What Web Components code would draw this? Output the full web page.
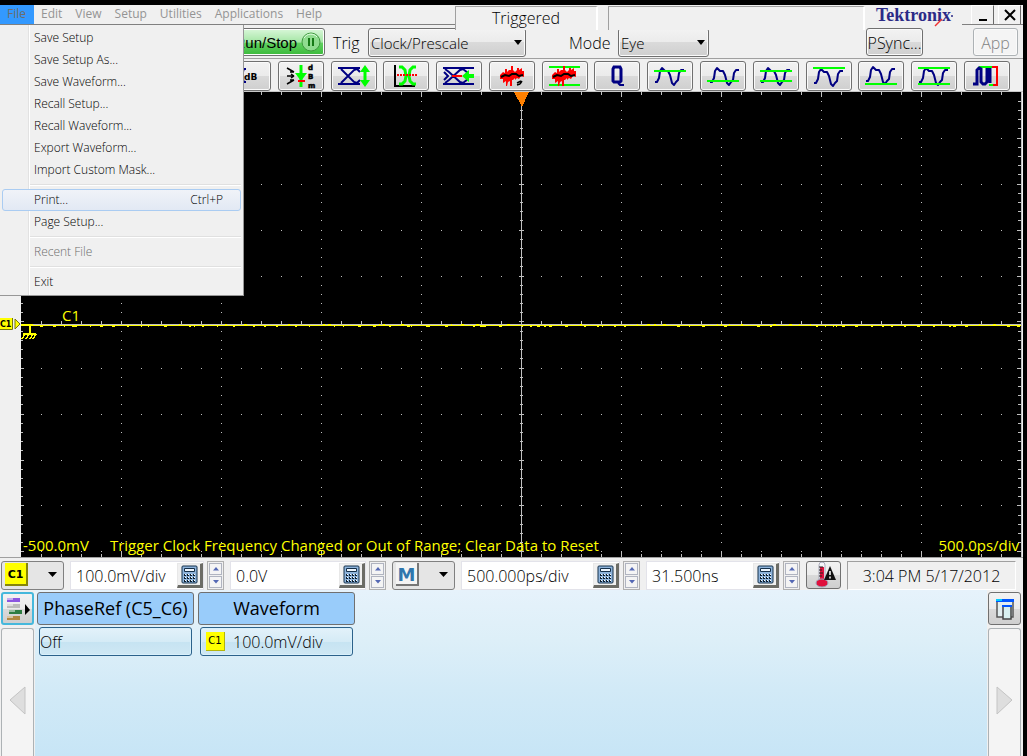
<!DOCTYPE html>
<html lang="en">
<head>
<meta charset="utf-8">
<title>Oscilloscope</title>
<style>
html,body{margin:0;height:100%;background:#000}
body{font-family:"Open Sans","Noto Sans",sans-serif;font-weight:300;font-size:16px;color:#000}
</style>
</head>
<body>
<scope-app></scope-app>
<script>
const define=(name,html,setup)=>{
  const t=document.createElement('template');
  t.innerHTML='<style>*{box-sizing:border-box}button,input,select{font:inherit;color:inherit;margin:0}button{padding:0}</style>'+html;
  customElements.define(name,class extends HTMLElement{
    connectedCallback(){
      if(this.shadowRoot)return;
      this.attachShadow({mode:'open'}).append(t.content.cloneNode(true));
      if(setup)setup(this,this.shadowRoot);
    }
  });
};

/* ---------- toolbar glyphs, 32 x 22 ---------- */
const N='fill="none" stroke="#000082" stroke-width="2"';
const G='stroke="#00ff00" stroke-width="2"';
const wave=(x,y)=>`<path ${N} stroke-linejoin="round" transform="translate(${x} ${y})" d="M1 16h2l2-4 1-7 2-3 3 3h3l2 4 2 8 2 2 2-3 2-2 1-7 2-3h3"/>`;
const noise='<path fill="#f00" d="M0 10l3-3 2 1V4h2v3l2-2h2V1h2v4l2 2 2-2V3h2v2l3-2v3h2v6l-3-1-2 3-2-1-2 2v-2l-2 2h-1v6h-2v-5l-2 1-1 4H6v-5l-3 2v-4H0z"/><path fill="none" stroke="#000" stroke-width="2" d="M1 12l4-2 4 1 3-2 4 0 3 2 4-1"/>';
const glyphs={
 eyedb:`<path ${N} d="M0 4h14M0 17h14M2 5l10 11M12 5L2 16"/><text x="12" y="15" font-family="DejaVu Sans" font-weight="700" font-size="9">dB</text>`,
 dbm:`<path stroke="#000" stroke-width="1.5" fill="none" d="M2 3l7 4M9 7l-4 0M2 11h7M9 11l-3-2M9 11l-3 2M2 19l7-4M9 15l-4 0"/><path stroke="#0f0" stroke-width="3" d="M16 0v22"/><path fill="#0f0" d="M10 8h12l-6 8z"/><path stroke="#f00" stroke-width="2" d="M13 16h7"/><g font-family="DejaVu Sans" font-weight="700" font-size="7" stroke="#000" stroke-width=".5"><text x="23" y="5">d</text><text x="23" y="14">B</text><text x="23" y="23">m</text></g>`,
 eyeheight:`<path ${N} d="M0 3h22M0 19h22M3 4l13 13 3 1 3-3M3 18L16 5l3-1 3 3"/><path stroke="#0f0" stroke-width="3" d="M27 4v14"/><path fill="#0f0" d="M27 0l5 7H22zM27 22l5-7H22z"/>`,
 cross:`<path fill="none" stroke="#000" stroke-width="2" d="M5 0v21h20"/><path fill="none" stroke="#0f0" stroke-width="3" d="M9 2h3l3 3 1 6-1 5-3 3H9M26 2h-3l-3 3-1 6 1 5 3 3h3"/><path stroke="#f00" stroke-width="2" stroke-dasharray="2 1" d="M7 10h20"/>`,
 eyewidth:`<path ${N} d="M0 3h31M0 19h31M2 4l4 3 11 10 3 1 5-4M2 18l4-3L17 5l3-1 5 4M1 7l4 4-4 4"/><path stroke="#f00" stroke-width="2" d="M9 11h10"/><path fill="#0f0" d="M19 11l7-6v4h5v4h-5v4z"/>`,
 noise:`<g transform="translate(4 0)">${noise}<path stroke="#000" stroke-width="1.5" d="M17 18l4-2M17 20l3-1M20 19l2-3"/></g>`,
 noise2:`<path ${G} d="M0 2h31M0 20h31"/><g transform="translate(3 0)">${noise}</g>`,
 q:`<path fill="none" stroke="#000082" stroke-width="3" d="M12 4l1-2h6l1 2v12l-1 1h-6l-1-1z"/><path fill="none" stroke="#000082" stroke-width="2" d="M17 18l2 2h4"/>`,
 w1:`${wave(0,1)}<path ${G} d="M0 6h32"/>`,
 w2:`${wave(2,1)}<path ${G} d="M0 16h32"/>`,
 w3:`${wave(0,1)}<path ${G} d="M0 6h32M0 16h32"/>`,
 w4:`${wave(0,2)}<path ${G} d="M0 3h32"/>`,
 w5:`${wave(0,0)}<path ${G} d="M0 19h32"/>`,
 w6:`${wave(0,1)}<path ${G} d="M0 3h32M0 19h32"/>`,
 gate:`<path ${G} d="M8 2h18M18 20h6"/><path fill="none" stroke="#000082" stroke-width="3" d="M2 19h4V5l2-2 2 1v13l2 2h2l2-2V3M19 3v15"/><path fill="none" stroke="#f00" stroke-width="2" d="M21 2h5v18h-4"/>`
};
define('tool-button',`<style>:host{display:block;width:46px;height:30px}
button{display:grid;place-items:center;width:100%;height:100%;border:1px solid #707070;border-radius:3px;background:linear-gradient(#f2f2f2,#ebebeb 50%,#dadada 50%,#cfcfcf);box-shadow:inset 0 0 0 1px #fafafa}svg{width:32px;height:22px;overflow:visible}</style><button type="button"></button>`,
(h,r)=>{const b=r.querySelector('button');b.setAttribute('aria-label',h.getAttribute('label'));b.innerHTML=`<svg viewBox="0 0 32 22">${glyphs[h.getAttribute('icon')]}</svg>`});

define('menu-bar',`<style>:host{display:flex;width:455px;flex:none;font-size:12px;line-height:18px;font-weight:400;border-bottom:1px solid #808080;background:#f0f0f0}
a{color:#949494;text-decoration:none;padding:0 6px 0 7px}a.on{background:#3399ff;color:#6d6d6d;padding-right:8px}</style>
<a class="on" href="#file">File</a><a href="#edit">Edit</a><a href="#view">View</a><a href="#setup">Setup</a><a href="#util">Utilities</a><a href="#apps">Applications</a><a href="#help">Help</a>`);

define('menu-item',`<style>:host{display:block}button{display:flex;justify-content:space-between;width:100%;height:22px;padding:0 17px 0 31px;border:1px solid transparent;border-radius:3px;background:none;line-height:20px;text-align:left}
:host([active]) button{border-color:#aaccf2;background:linear-gradient(#f0f3f8,#e2e9f4)}:host([off]) button{color:#6d6d6d}</style><button type="button"><span><slot></slot></span><slot name="key"></slot></button>`);

define('file-menu',`<style>:host{display:block;width:244px;padding:2px 2px;font-size:12px;background:linear-gradient(90deg,transparent 28px,#e2e2e2 28px,#e2e2e2 29px,#fff 29px,#fff 30px,transparent 30px) no-repeat #f0f0f0;border:solid #979797;border-width:0 1px 1px 0;box-sizing:border-box}
hr{margin:3px 0 3px 28px;border:0;height:2px;background:linear-gradient(#e0e0e0 50%,#fff 50%)}</style>
<menu-item>Save Setup</menu-item><menu-item>Save Setup As...</menu-item><menu-item>Save Waveform...</menu-item><menu-item>Recall Setup...</menu-item><menu-item>Recall Waveform...</menu-item><menu-item>Export Waveform...</menu-item><menu-item>Import Custom Mask...</menu-item><hr>
<menu-item active>Print...<span slot="key">Ctrl+P</span></menu-item><menu-item>Page Setup...</menu-item><hr><menu-item off>Recent File</menu-item><hr><menu-item>Exit</menu-item>`);

define('title-strip',`<style>:host{display:flex;height:20px;position:relative;z-index:1;background:#f0f0f0}
.state{width:143px;height:24px;border:solid #a0a0a0;border-width:1px 0 0 1px;border-right:2px solid #fff;margin-top:1px;text-align:center;line-height:23px;background:#f0f0f0;flex:none}
.blank{flex:1;height:24px;margin:1px 0 0 10px;border:solid #a0a0a0;border-width:1px 0 0 1px;border-right:2px solid #fff;background:#f0f0f0}
.logo{width:97px;padding-left:11px;color:#2b2a86;font:bold 18px/20px "Liberation Serif",serif;display:flex;position:relative}
.logo svg{position:absolute;left:68px;top:7px;width:20px;height:15px}
.win{display:flex;gap:4px;padding-left:9px;border-bottom:1px solid #808080;width:61px}
.win button{width:23px;height:19px;border:1px solid #fff;border-right-color:#696969;border-bottom:0;background:#f0f0f0;display:grid;place-items:center}</style>
<menu-bar></menu-bar><div class="state">Triggered</div><div class="blank"></div>
<div class="logo">Tektronix<svg viewBox="0 0 20 15"><path d="M2 14l7-7" stroke="#f03030" stroke-width="1.500"/><circle cx="19" cy="4" r="1" fill="#2b2a86"/></svg></div>
<div class="win"><button type="button" aria-label="Minimize"><svg width="12" height="14"><path d="M2 12h8" stroke="#000" stroke-width="2"/></svg></button><button type="button" aria-label="Close"><svg width="12" height="14"><path d="M1 2l10 10M11 2L1 12" stroke="#000" stroke-width="2"/></svg></button></div>`);

define('pick-list',`<style>:host{display:block;position:relative;height:29px;font-size:15px}
select{appearance:none;width:100%;height:100%;padding:0 2px;border:1px solid #707070;border-radius:3px;background:linear-gradient(#f2f2f2,#ebebeb 50%,#dadada 50%,#cfcfcf);box-shadow:inset 0 0 0 1px #fafafa}
svg{position:absolute;right:4px;top:12px;pointer-events:none}</style><select></select><svg width="8" height="5"><path d="M0 0h8L4 5z"/></svg>`,
(h,r)=>{const s=r.querySelector('select');s.setAttribute('aria-label',h.getAttribute('label'));s.add(new Option(h.getAttribute('value')))});

define('run-row',`<style>:host{display:flex;align-items:flex-start;height:34px;padding:3px 5px 0 205px;background:#f0f0f0;border-bottom:1px solid #a0a0a0;box-sizing:border-box}
.run{width:120px;height:28px;border:1px solid #707070;border-radius:3px;background:linear-gradient(#d9f7d9,#a5e6a5 50%,#5fd05f 55%,#3cba3c);box-shadow:inset 0 0 0 1px #fff;display:flex;align-items:center;justify-content:flex-end;gap:4px;padding-right:3px;font-size:15px;font-family:"Liberation Sans",sans-serif}
.lab{line-height:31px;width:43px;padding-left:8px}.mode{margin-left:35px;width:57px}
.trig{width:158px}.eye{width:91px}
.b{height:28px;border:1px solid #707070;border-radius:3px;background:linear-gradient(#f2f2f2,#ebebeb 50%,#dadada 50%,#cfcfcf);padding-top:2px;box-shadow:inset 0 0 0 1px #fafafa}
.ps{width:57px;margin-left:auto}.app{width:45px;margin-left:50px;color:#838383;background:#f4f4f4;border-color:#adb2b5}</style>
<button class="run" type="button">Run/Stop<svg width="20" height="20"><circle cx="10" cy="10" r="9" fill="#8fdc8f" stroke="#3f9a3f"/><path d="M3 6a8 8 0 0 1 13-1" fill="none" stroke="#e5ffe5"/><path d="M8 6v8M12 6v8" stroke="#167a16" stroke-width="2"/></svg></button>
<span class="lab">Trig</span><pick-list class="trig" label="Trig" value="Clock/Prescale"></pick-list>
<span class="lab mode">Mode</span><pick-list class="eye" label="Mode" value="Eye"></pick-list>
<button class="b ps" type="button">PSync...</button><button class="b app" type="button" disabled>App</button>`);

define('tool-row',`<style>:host{display:flex;justify-content:space-between;height:33px;padding:2px 13px 0 225px;background:#f0f0f0;border-bottom:1px solid #c8c8c8;box-sizing:border-box}</style>`,
(h,r)=>[['eyedb','Extinction ratio dB'],['dbm','Average power'],['eyeheight','Eye height'],['cross','Crossing'],['eyewidth','Eye width'],['noise','Jitter'],['noise2','Jitter levels'],['q','Q factor'],['w1','High'],['w2','Low'],['w3','Amplitude'],['w4','Max'],['w5','Min'],['w6','Peak to peak'],['gate','Gate']].forEach(([i,l])=>{const b=document.createElement('tool-button');b.setAttribute('icon',i);b.setAttribute('label',l);r.append(b)}));

define('scope-screen',`<style>:host{display:flex;height:466px;background:#f0f0f0;border-bottom:1px solid #a0a0a0;box-sizing:border-box;font-size:15px;font-weight:400}
.edge{width:21px;flex:none;padding-top:224px}.edge svg{display:block}
.view{flex:1;position:relative;background:#000;color:#ff0;margin-right:1px;border-right:1px solid #c0c0c0}
.grid{display:block;width:100%;height:465px}
.c1{position:absolute;left:41px;top:213px;line-height:20px}
.foot{position:absolute;left:2px;right:2px;bottom:2px;display:flex;line-height:20px}
.msg{margin-left:21px}.rate{margin-left:auto}</style>
<div class="edge"><svg width="21" height="16"><path fill="#ff0" d="M0 2h12v11H0z"/><path fill="none" stroke="#77770a" d="M0 13.500h12.500V2"/><text x="0" y="11" font-family="DejaVu Sans" font-weight="700" font-size="8">C1</text><path fill="#ff0" stroke="#77770a" d="M15 3l5 5-5 5z"/></svg></div>
<div class="view"><svg class="grid" viewBox="0 0 1000 465" preserveAspectRatio="none" shape-rendering="crispEdges"></svg><span class="c1">C1</span><div class="foot"><span>-500.0mV</span><span class="msg">Trigger Clock Frequency Changed or Out of Range; Clear Data to Reset</span><span class="rate">500.0ps/div</span></div></div>`,
(h,r)=>{
  let g='',y='',seed=7;
  const p=(x,t,w,ht)=>`M${x} ${t}h${w}v${ht}h${-w}z`;
  const rnd=()=>(seed=(seed*16807)%2147483647)/2147483647;
  for(let j=1;j<=50;j++){
    const t=Math.floor(j*9.2),big=j%5===0;
    for(let i=1;i<10;i++)if(i!==5)g+=p(i*100,t,1,1);
    g+=p(0,t,big?3:2,1)+p(big?996:997,t,4,1)+p(big?498:499,t,big?5:3,1);
    if(big)for(let x=20;x<1000;x+=20)g+=p(x,t,1,1);
  }
  for(let x=20;x<1000;x+=20){const l=x%100?3:5;g+=p(x,0,1,l)+p(x,465-l,1,l)+p(x,230,1,2)}
  g+=p(500,0,1,465)+p(0,232,1000,1);
  for(let x=2;x<1000;x+=3+Math.floor(rnd()*14))y+=p(x,rnd()<.3?232:234,1+Math.floor(rnd()*3),1);
  y+=p(0,233,1000,1);
  r.querySelector('.grid').innerHTML=`<path fill="#c0c0c0" d="${g}"/><path fill="#ff0" d="${y}"/><path d="M0 232h10v2H0zM8 234h2v7H8zM2 241h13v2H2z" fill="#ff0"/><path d="M4 242l-3 5M8 242l-3 5M12 242l-3 5M15 242l-3 5" stroke="#ff0" stroke-width="1.500"/><path fill="#ff8000" d="M493 0h15l-7 15z"/>`;
});

define('source-pick',`<style>:host{display:block;width:63px;flex:none;height:29px}
button{width:100%;height:100%;border:1px solid #808080;border-radius:3px;background:#e5e5e5;display:flex;align-items:center;justify-content:space-between;padding:0 6px 2px 3px}
b{width:23px;height:23px;border:solid #777;border-width:0 2px 2px 0;font:bold 11px/24px "DejaVu Sans",sans-serif;background:#ff0}
:host([math]) b{background:#f4f4f4;color:#2f76ad;font-size:18px}:host(:not([math])) b{border-color:#85850a}</style><button type="button"><b><slot></slot></b><svg width="9" height="5"><path d="M0 0h9L4.500 5z"/></svg></button>`);

define('value-field',`<style>:host{display:flex;height:29px;gap:3px;min-width:0}
.box{flex:1;display:flex;background:#fff;border:1px solid #e3e3ea;min-width:0}
input{flex:1;width:0;min-width:0;border:0;background:none;padding:0 0 0 5px;outline:0}
.calc{width:26px;height:25px;flex:none;margin-top:1px;border:1px solid #e8e8e8;border-right:3px solid #6c6c66;border-bottom:3px solid #6c6c66;background:#f0f0f0;display:grid;place-items:center}
.spin{width:17px;flex:none;display:grid;gap:1px;border:1px solid #b0b0b0;padding:1px}
.spin button{border:1px solid #b0b4c0;background:#f4f4f4;display:grid;place-items:center;min-height:0}</style>
<div class="box"><input><button class="calc" type="button" aria-label="Keypad"><svg width="17" height="19"><rect x="1" y="1" width="15" height="17" rx="1" fill="#8fb4dc" stroke="#15304a"/><path fill="#eef6ff" stroke="#15304a" d="M3.500 3.500h10v3h-10z"/><path fill="none" stroke="#0b1e30" stroke-width="2" stroke-dasharray="2 1" d="M3 10h12M3 13h12M3 16h12"/><path fill="none" stroke="#fff" stroke-dasharray="1 2" d="M4 9.500h11M4 12.500h11M4 15.500h11"/></svg></button></div>
<div class="spin"><button type="button" aria-label="Increase"><svg width="6" height="4"><path d="M0 3.500h6L3 0z" fill="#5468b4"/></svg></button><button type="button" aria-label="Decrease"><svg width="6" height="4"><path d="M0 0h6L3 3.500z" fill="#5468b4"/></svg></button></div>`,
(h,r)=>{const i=r.querySelector('input');i.value=h.getAttribute('value');i.setAttribute('aria-label',h.getAttribute('label'))});

define('status-bar',`<style>:host{display:flex;gap:6px;height:32px;padding:3px 7px 0 1px;background:#f0f0f0;box-sizing:border-box}
.a{flex:154 1 0}.b{flex:156 1 0}.c{flex:179 1 0}.d{flex:154 1 0}
.temp{width:35px;flex:none;height:28px;border:1px solid #707070;border-radius:3px;background:linear-gradient(#f2f2f2,#ebebeb 50%,#dadada 50%,#cfcfcf);display:grid;place-items:center}
time{width:169px;flex:none;border:1px solid #fff;border-top-color:#a0a0a0;border-left-color:#a0a0a0;text-align:center;line-height:29px;height:29px}</style>
<source-pick>C1</source-pick><value-field class="a" label="Vertical scale" value="100.0mV/div"></value-field><value-field class="b" label="Vertical offset" value="0.0V"></value-field><source-pick math>M</source-pick><value-field class="c" label="Time scale" value="500.000ps/div"></value-field><value-field class="d" label="Position" value="31.500ns"></value-field>
<button class="temp" type="button" aria-label="Temperature"><svg width="24" height="26"><path d="M7 3a3 3 0 0 1 6 0v14h-6z" fill="#f6f6fa" stroke="#aab"/><path d="M8 5h4v14H8z" fill="#e0103c"/><ellipse cx="10" cy="21" rx="6" ry="4" fill="#e0103c" stroke="#9ab" /><path d="M7 5h4M7 8h3M7 11h4M7 14h3" stroke="#222"/><path d="M18 4l6 14H12z" fill="#111"/><path d="M18 9v4M18 14.500v2" stroke="#fff" stroke-width="1.500"/></svg></button><time>3:04 PM 5/17/2012</time>`);

define('side-scroll',`<style>:host{display:grid;grid-template-rows:33px 1fr;gap:3px;width:34px;padding:2px 1px 0;box-sizing:border-box}
:host([left]){padding-right:0}
:host(:not([left])){width:36px;padding-right:2px}
.top{border:1px solid #707070;border-radius:3px;background:linear-gradient(#f2f2f2,#ebebeb 50%,#dadada 50%,#cfcfcf);display:grid;place-items:center}
:host([left]) .top{border:2px solid #45b8dc}
.arrow{border:1px solid #adb2b5;border-bottom:0;border-radius:3px 3px 0 0;background:#f4f4f4;display:grid;place-items:start center;padding-top:57px}
:host(:not([left])) .arrow svg{transform:scaleX(-1)}</style>
<button class="top" type="button" aria-label="Panel"></button><button class="arrow" type="button" aria-label="Scroll" disabled><svg width="17" height="29"><path d="M16 1v27L1 14z" fill="#dedede" stroke="#c4c4c4"/></svg></button>`,
(h,r)=>{r.querySelector('.top').innerHTML=h.hasAttribute('left')
 ?'<svg width="26" height="26"><path fill="#8c56e0" d="M2 2h13v4H2z"/><path fill="#bbb" d="M2 8h13v4H2z"/><path fill="#2e7d42" d="M4 14h13v4H4z"/><path fill="#b08840" d="M2 20h13v4H2z"/><path fill="#fff" opacity=".5" d="M2 2h6v2H2zM2 8h6v2H2zM4 14h6v2H4zM2 20h6v2H2z"/><path d="M20 8v11l5-5z"/></svg>'
 :'<svg width="20" height="22"><path fill="#e2eef0" stroke="#555" stroke-width="1.500" d="M2 3h16v16H2z"/><path fill="#05f" d="M1 1h18v3H1z"/><path fill="#0cf" d="M1 1h6v2H1z"/><path fill="#d8f0f0" stroke="#444" stroke-width="1.500" d="M8 8h8v13H8z"/><path fill="#05f" d="M7 7h10v2H7z"/></svg>'});

define('readout-card',`<style>:host{display:flex;flex-direction:column;align-items:flex-start;width:157px}
.h{width:100%;height:33px;font-size:18px;font-weight:400;border:1px solid #707070;border-radius:3px;background:#99ccfa;white-space:nowrap;line-height:28px;padding-bottom:2px}
.v{width:153px;height:29px;margin:2px 0 0 2px;border:1px solid #2c628b;border-radius:3px;background:linear-gradient(#e3f2fa,#d5ebf6 50%,#c6e3f2 50%,#cfe8f4);box-shadow:inset 0 0 0 1px #d8f0fb;display:flex;align-items:center;padding:0}
::slotted(i){width:19px;height:19px;margin:0 8px 0 5px;background:#ff0;border:solid #b5b50a;border-width:0 1px 1px 0;font:normal 10px/18px "DejaVu Sans",sans-serif;text-align:center}</style>
<button class="h" type="button"><slot name="title"></slot></button><button class="v" type="button"><slot></slot></button>`);

define('readout-panel',`<style>:host{display:flex;flex:1;background:#f0f0f0}
.area{flex:1;display:flex;gap:4px;padding:2px 2px 0;margin-left:1px;background:linear-gradient(#e6f2fb,#ddeff8 30%,#d2eaf7 60%,#c7e5f6)}</style>
<side-scroll left></side-scroll><div class="area"><readout-card><span slot="title">PhaseRef (C5_C6)</span>Off</readout-card><readout-card><span slot="title">Waveform</span><i>C1</i>100.0mV/div</readout-card></div><side-scroll></side-scroll>`);

define('scope-app',`<style>:host{display:flex;flex-direction:column;min-height:100vh;padding:5px 4px 0 0;position:relative;overflow:hidden;box-sizing:border-box}
file-menu{position:absolute;left:0;top:25px;z-index:2}</style>
<title-strip></title-strip><file-menu></file-menu><run-row></run-row><tool-row></tool-row><scope-screen></scope-screen><status-bar></status-bar><readout-panel></readout-panel>`);
</script>
</body>
</html>
